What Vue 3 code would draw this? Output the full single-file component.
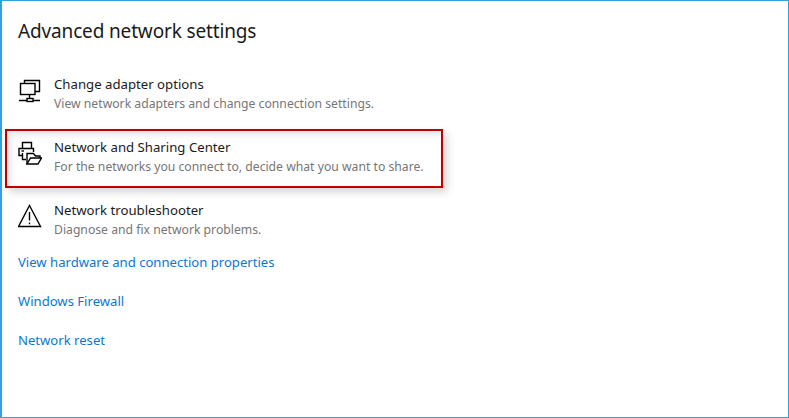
<script setup>
const rows = [
  { id: 'adapter', title: 'Change adapter options', desc: 'View network adapters and change connection settings.' },
  { id: 'sharing', title: 'Network and Sharing Center', desc: 'For the networks you connect to, decide what you want to share.', marked: true },
  { id: 'trouble', title: 'Network troubleshooter', desc: 'Diagnose and fix network problems.' }
]
const links = ['View hardware and connection properties', 'Windows Firewall', 'Network reset']
</script>

<template>
  <main class="page">
    <h1 class="heading">Advanced network settings</h1>
    <section class="rows">
      <div v-for="row in rows" :key="row.id" class="row">
        <div class="icon">
          <svg v-if="row.id === 'adapter'" width="24" height="26" viewBox="0 0 24 26" fill="none" stroke="#000" stroke-width="1.4">
            <path d="M6.5 5V2.5H21.5V13.5H17" />
            <rect x="2.5" y="5.5" width="14.5" height="11" fill="#fff" />
            <path d="M11.5 16.5V20M1 22.5H9M15 22.5H22" />
            <rect x="9" y="20.5" width="6" height="3" />
          </svg>
          <svg v-else-if="row.id === 'sharing'" width="24" height="26" viewBox="0 0 24 26" fill="none" stroke="#000" stroke-width="1.4">
            <path d="M4.5 7.5V1.5H13.5V7.5" />
            <path d="M4 14.5H1V7.5H15.5V11" />
            <path d="M3.5 10H6" />
            <path d="M4.5 12V18.5H8" />
            <path d="M9 23V12.5H15.5L17.5 15H22V17" />
            <path d="M9 23H20L23.5 17H12.5L9 23Z" fill="#fff" />
          </svg>
          <svg v-else width="24" height="26" viewBox="0 0 24 26" fill="none" stroke="#000" stroke-width="1.4">
            <path d="M11.5 1.5L22.5 22.5H0.5L11.5 1.5Z" />
            <path d="M11.5 8V16.5M11.5 18.4V20.2" />
          </svg>
        </div>
        <div class="text">
          <div class="title">{{ row.title }}</div>
          <div class="desc">{{ row.desc }}</div>
        </div>
        <div v-if="row.marked" class="mark"></div>
      </div>
    </section>
    <nav class="links">
      <a v-for="link in links" :key="link" class="link">{{ link }}</a>
    </nav>
  </main>
</template>

<style>
html, body { margin: 0; background: #fff; }
</style>

<style scoped>
.page {
  box-sizing: border-box;
  width: 789px;
  height: 418px;
  overflow: hidden;
  background: #fff;
  border: 1px solid #2ea3dc;
  border-left-width: 2px;
  padding: 16px 0 0 16px;
  font-family: "Noto Sans", "Open Sans", sans-serif;
}
.heading {
  margin: 0;
  font-size: 19px;
  letter-spacing: -0.15px;
  line-height: 28px;
  font-weight: 400;
  color: #1a1a1a;
}
.rows {
  display: flex;
  flex-direction: column;
  gap: 23px;
  margin-top: 30px;
}
.row {
  position: relative;
  display: flex;
  width: 430px;
  height: 40px;
}
.icon {
  width: 36px;
  padding-top: 3px;
  flex: none;
}
.icon svg { display: block; }
.title {
  font-size: 13.2px;
  line-height: 19px;
  color: #1a1a1a;
  white-space: nowrap;
}
.desc {
  font-size: 12.2px;
  line-height: 19px;
  color: #767676;
  white-space: nowrap;
}
.mark {
  position: absolute;
  left: -13px;
  top: -9px;
  width: 438px;
  height: 59px;
  box-sizing: border-box;
  border: 2px solid #c00000;
  box-shadow: 4px 4px 8px rgba(0, 0, 0, 0.17), inset 4px 4px 6px rgba(0, 0, 0, 0.1);
  pointer-events: none;
}
.links {
  display: flex;
  flex-direction: column;
  align-items: flex-start;
  gap: 19px;
  margin-top: 11px;
}
.link {
  font-size: 13.1px;
  line-height: 20px;
  color: #0a78d2;
  white-space: nowrap;
}
</style>
